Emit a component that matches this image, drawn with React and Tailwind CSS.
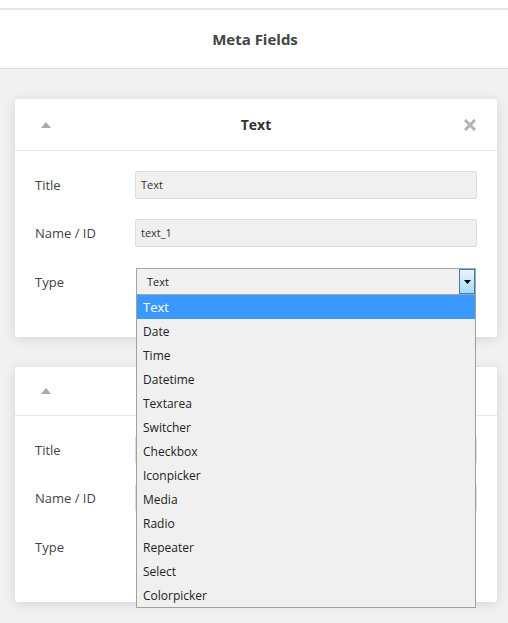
import React from 'react';

const TYPES = ['Text', 'Date', 'Time', 'Datetime', 'Textarea', 'Switcher', 'Checkbox', 'Iconpicker', 'Media', 'Radio', 'Repeater', 'Select', 'Colorpicker'];

const font = { fontFamily: '"Open Sans", "Noto Sans", sans-serif' };

const UpArrow = () => (
    <svg width="10" height="6" viewBox="0 0 10 6" className="block">
        <polygon points="5,0 10,6 0,6" fill="#aaaaaa" />
    </svg>
);

const CloseIcon = () => (
    <svg width="12" height="12" viewBox="0 0 12 12" className="block">
        <path d="M2 2 L10 10 M10 2 L2 10" stroke="#b3b3b3" strokeWidth="3" strokeLinecap="square" />
    </svg>
);

const Field = ({ label, value }) => (
    <div className="flex items-center">
        <div className="w-[100px] pt-[2px] text-[13px] text-[#444]">{label}</div>
        <div className="flex-1 h-[28px] flex items-center px-[5px] bg-[#f0f0f0] border border-[#dcdcdc] rounded-[2px] text-[11px] text-[#333]">
            {value}
        </div>
    </div>
);

const TypeSelect = ({ open, value }) => (
    <div className="flex items-center mt-[1px]">
        <div className="w-[100px] pt-[2px] text-[13px] text-[#444]">Type</div>
        <div className="relative flex-1 mx-[1px]">
            <div className="h-[27px] flex items-center pl-[10px] pt-[1px] bg-[#f0f0f0] border border-[#a5a5a5] text-[11px] text-[#222]">
                {value}
                <div className="absolute right-[1px] top-[1px] w-[16px] h-[25px] border border-[#3c7fb1] bg-gradient-to-b from-[#eaf6fd] to-[#a7d9f5] flex items-center justify-center">
                    <svg width="7" height="4" viewBox="0 0 7 4" className="block">
                        <polygon points="0,0 7,0 3.5,4" fill="#000" />
                    </svg>
                </div>
            </div>
            {open && (
                <div className="absolute left-0 right-0 top-[27px] z-20 bg-[#f0f0f0] border border-[#a0a0a0] border-t-0">
                    {TYPES.map((t, i) => (
                        <div
                            key={t}
                            className={`h-[24px] flex items-center pl-[6px] pt-[2px] ${i === 0 ? 'bg-[#3999ff] text-white text-[13px]' : 'text-[#222] text-[12px]'}`}
                        >
                            {t}
                        </div>
                    ))}
                </div>
            )}
        </div>
    </div>
);

const FieldCard = ({ title, headerH, open, className }) => (
    <div className={`bg-white rounded-[3px] shadow-[0_2px_12px_rgba(0,0,0,0.12)] ${className}`}>
        <div className={`${headerH} relative flex items-center justify-center border-b border-[#e6e6e6]`}>
            <div className="absolute left-[26px] top-1/2 -translate-y-1/2"><UpArrow /></div>
            <span className="text-[14px] font-bold text-[#333]">{title}</span>
            <div className="absolute right-[21px] top-1/2 -translate-y-1/2"><CloseIcon /></div>
        </div>
        <div className="px-[20px] pt-[20px] pb-[42px] flex flex-col gap-[20px]">
            <Field label="Title" value={title ? 'Text' : ''} />
            <Field label="Name / ID" value={title ? 'text_1' : ''} />
            <TypeSelect open={open} value={title ? 'Text' : ''} />
        </div>
    </div>
);

export default function App() {
    return (
        <div className="w-[508px] h-[623px] overflow-hidden bg-[#f1f1f1]" style={font}>
            <div className="h-[8px] bg-white" />
            <div className="h-[2px] bg-[#e4e4e4]" />
            <div className="h-[59px] bg-white border-b border-[#dedede] flex items-center justify-center">
                <h1 className="text-[15px] font-bold text-[#444] ml-[2px]">Meta Fields</h1>
            </div>
            <div className="pt-[30px] pl-[15px] pr-[11px] flex flex-col gap-[30px]">
                <FieldCard title="Text" headerH="h-[52px]" open className="relative z-10" />
                <FieldCard title="" headerH="h-[49px]" />
            </div>
        </div>
    );
}
